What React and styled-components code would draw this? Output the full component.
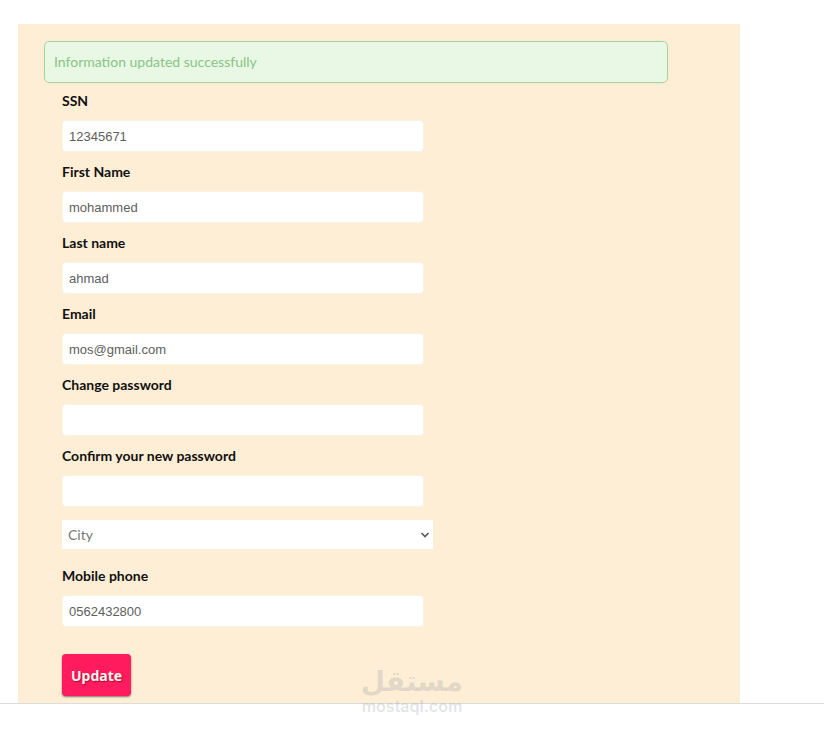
import React, { useState } from 'react';
import styled, { createGlobalStyle } from 'styled-components';

const GlobalStyle = createGlobalStyle`
  * {
    box-sizing: border-box;
  }

  body {
    margin: 0;
    background-color: #ffffff;
    color: #111111;
    font-family: Lato, 'Noto Sans', sans-serif;
    font-size: 14px;
  }
`;

const Page = styled.div`
  min-height: 100vh;
  padding: 24px 0;
`;

const Content = styled.div`
  position: relative;
  border-bottom: 1px solid #dddcda;
`;

const Panel = styled.main`
  margin: 0 84px 0 18px;
  padding: 17px 72px 7px 26px;
  background-color: #feeed5;
`;

const Alert = styled.div`
  padding: 10px 9px;
  border: 1px solid #a8d296;
  border-radius: 5px;
  background-color: #e8f8e4;
  color: #8ac485;
  line-height: 20px;
`;

const Form = styled.form`
  display: flex;
  flex-direction: column;
  align-items: flex-start;
  padding: 8px 18px 0;
`;

const Field = styled.div`
  display: flex;
  flex-direction: column;
  gap: 9px;
  width: 100%;
  max-width: 362px;
  margin-bottom: 10px;
`;

const Label = styled.label`
  font-weight: 700;
  line-height: 20px;
`;

const Input = styled.input`
  width: 100%;
  height: 32px;
  padding: 0 6px;
  border: 1px solid #f7f4e4;
  border-radius: 4px;
  background-color: #ffffff;
  color: #606060;
  font-family: 'Liberation Sans', Arial, sans-serif;
  font-size: 13px;
`;

const SelectBox = styled.div`
  display: grid;
  align-items: center;
  width: 100%;
  max-width: 371px;
  margin: 3px 0 17px;

  > * {
    grid-area: 1 / 1;
  }
`;

const Select = styled.select`
  appearance: none;
  width: 100%;
  height: 29px;
  padding: 0 24px 0 6px;
  border: none;
  border-radius: 0;
  background-color: #ffffff;
  color: #777777;
  font: inherit;
`;

const Chevron = styled.svg`
  justify-self: end;
  margin-right: 3px;
  pointer-events: none;
`;

const UpdateButton = styled.button`
  height: 42px;
  margin-top: 17px;
  padding: 0 9px;
  border: none;
  border-radius: 4px;
  background-color: #ff1b5d;
  box-shadow: 0 1px 2px rgba(0, 0, 0, 0.5);
  color: #fff5ee;
  font-family: 'Noto Sans', sans-serif;
  font-size: 14px;
  font-weight: 700;
  text-shadow: 1px 1px 1px rgba(0, 0, 0, 0.4);
  cursor: pointer;
`;

const Watermark = styled.div`
  position: absolute;
  right: 0;
  bottom: -13px;
  left: 0;
  display: flex;
  flex-direction: column;
  align-items: center;
  color: rgba(155, 160, 165, 0.28);
  pointer-events: none;
`;

const WatermarkName = styled.span`
  font-family: 'DejaVu Sans', sans-serif;
  font-size: 28px;
  font-weight: 700;
  line-height: 28px;
`;

const WatermarkSite = styled.span`
  font-family: Inter, sans-serif;
  font-size: 16px;
  font-weight: 600;
  line-height: 20px;
`;

const accountFields = [
  { name: 'ssn', label: 'SSN', type: 'text' },
  { name: 'firstName', label: 'First Name', type: 'text' },
  { name: 'lastName', label: 'Last name', type: 'text' },
  { name: 'email', label: 'Email', type: 'email' },
  { name: 'password', label: 'Change password', type: 'password' },
  { name: 'confirmPassword', label: 'Confirm your new password', type: 'password' },
];

const FormField = ({ name, label, type, value, onChange }) => (
  <Field>
    <Label htmlFor={name}>{label}</Label>
    <Input id={name} name={name} type={type} value={value} onChange={onChange} />
  </Field>
);

const App = () => {
  const [values, setValues] = useState({
    ssn: '12345671',
    firstName: 'mohammed',
    lastName: 'ahmad',
    email: 'mos@gmail.com',
    password: '',
    confirmPassword: '',
    city: '',
    phone: '0562432800',
  });

  const handleChange = (e) => {
    setValues({ ...values, [e.target.name]: e.target.value });
  };

  return (
    <>
      <GlobalStyle />
      <Page>
        <Content>
          <Panel>
            <Alert role="status">Information updated successfully</Alert>
            <Form onSubmit={(e) => e.preventDefault()}>
              {accountFields.map((field) => (
                <FormField
                  key={field.name}
                  {...field}
                  value={values[field.name]}
                  onChange={handleChange}
                />
              ))}
              <SelectBox>
                <Select name="city" aria-label="City" value={values.city} onChange={handleChange}>
                  <option value="">City</option>
                </Select>
                <Chevron width="10" height="8" viewBox="0 0 10 8" fill="none" aria-hidden="true">
                  <path d="M1.5 2L5 5.5L8.5 2" stroke="#5c5754" strokeWidth="1.6" />
                </Chevron>
              </SelectBox>
              <FormField
                name="phone"
                label="Mobile phone"
                type="tel"
                value={values.phone}
                onChange={handleChange}
              />
              <UpdateButton type="submit">Update</UpdateButton>
            </Form>
          </Panel>
          <Watermark>
            <WatermarkName lang="ar">مستقل</WatermarkName>
            <WatermarkSite>mostaql.com</WatermarkSite>
          </Watermark>
        </Content>
      </Page>
    </>
  );
};

export default App;
